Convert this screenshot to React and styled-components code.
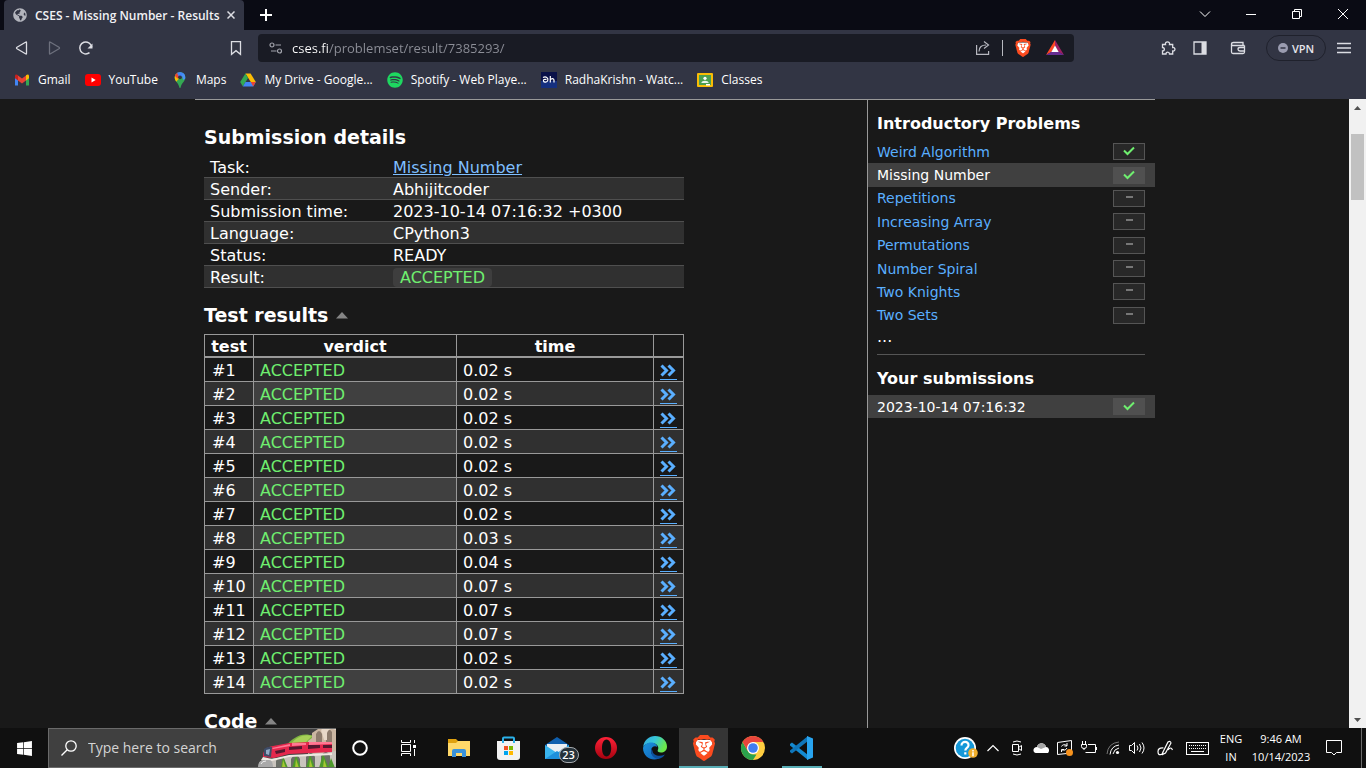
import React from "react";
import styled, { createGlobalStyle } from "styled-components";
import { FaSpotify, FaWindows, FaGlobeAmericas } from "react-icons/fa";
import { SiBrave } from "react-icons/si";

const GlobalStyle = createGlobalStyle`
  *, *::before, *::after { box-sizing: border-box; }
  html, body { margin: 0; padding: 0; background: #191919; }
  body { font-family: "DejaVu Sans", Verdana, sans-serif; color: #fff; }
  button { border: 0; padding: 0; background: none; color: inherit; font: inherit; }
  h2, h3, ul { margin: 0; padding: 0; }
  svg { display: block; flex: none; }
`;

const ui = `"Open Sans", "Segoe UI", sans-serif`;

const Desktop = styled.div`
  display: flex;
  flex-direction: column;
  height: 100vh;
  overflow: hidden;
`;

/* ---------- browser chrome ---------- */

const Browser = styled.header`
  flex: none;
  font-family: ${ui};
  background: #323544;
`;

const TabStrip = styled.div`
  display: flex;
  align-items: stretch;
  height: 30px;
  padding-left: 4px;
  background: #0a0b14;
`;

const Tab = styled.div`
  display: flex;
  align-items: center;
  width: 240px;
  padding: 0 6px 0 9px;
  border-radius: 4px 4px 0 0;
  background: #323544;
  color: #f1f1f4;
  font-size: 12px;
  font-weight: 600;
`;

const TabTitle = styled.span`
  flex: 1;
  margin-left: 8px;
  white-space: nowrap;
`;

const IconButton = styled.button`
  display: flex;
  align-items: center;
  justify-content: center;
  width: ${(p) => p.$w || 32}px;
  height: ${(p) => p.$h || 28}px;
  color: ${(p) => p.$color || "#dcdde3"};
`;

const WindowControls = styled.div`
  display: flex;
  margin-left: auto;
`;

const Toolbar = styled.div`
  display: flex;
  align-items: center;
  height: 36px;
  padding: 0 6px;
`;

const NavButtons = styled.div`
  display: flex;
  margin-right: 118px;
`;

const AddressBar = styled.div`
  display: flex;
  flex: 1;
  align-items: center;
  height: 28px;
  margin: 0 78px 0 6px;
  padding: 0 7px 0 11px;
  border-radius: 4px;
  background: #191b24;
`;

const UrlInput = styled.input`
  flex: 1;
  min-width: 0;
  height: 22px;
  margin-left: 9px;
  padding: 0;
  border: 0;
  outline: 0;
  font: 13px/22px ${ui};
  color: #fff;
  background: linear-gradient(90deg, #fff 36px, #8d8f98 36px);
  background-clip: text;
  -webkit-text-fill-color: transparent;
`;

const AddressActions = styled.div`
  display: flex;
  align-items: center;
  gap: 11px;
`;

const Rule = styled.span`
  width: 1px;
  height: 16px;
  background: #b8b9c0;
`;

const Extensions = styled.div`
  display: flex;
  align-items: center;
`;

const VpnButton = styled.button`
  display: flex;
  align-items: center;
  justify-content: center;
  gap: 4px;
  width: 60px;
  height: 26px;
  margin: 0 2px 0 6px;
  border: 1px solid #1f212c;
  border-radius: 13px;
  color: #e6e6ec;
  font-size: 11px;
  font-weight: 600;
`;

const Bookmarks = styled.nav`
  display: flex;
  align-items: center;
  gap: 14px;
  height: 33px;
  padding: 0 14px 5px;
`;

const Bookmark = styled.a`
  display: flex;
  align-items: center;
  gap: 8px;
  color: #fff;
  font-size: 12px;
  line-height: 16px;
  text-decoration: none;
  white-space: nowrap;
`;

/* ---------- page ---------- */

const Viewport = styled.div`
  display: flex;
  flex: 1;
  min-height: 0;
`;

const Page = styled.div`
  display: flex;
  flex: 1;
  justify-content: center;
  padding-left: 1px;
  overflow: hidden;
  background: #191919;
`;

const Columns = styled.div`
  display: grid;
  grid-template-columns: 1fr 288px;
  width: 100%;
  max-width: 960px;
  border-top: 1px solid #999;
`;

const Main = styled.main`
  padding: 10px 9px 0;
`;

const SectionTitle = styled.h2`
  display: flex;
  align-items: center;
  gap: 8px;
  margin: 16px 0 8px;
  font-size: 19px;
  line-height: 22px;
  font-weight: 700;
`;

const Summary = styled.table`
  width: 480px;
  border-collapse: separate;
  border-spacing: 0;
  font-size: 16px;
  line-height: 19px;
  tr:nth-child(even) { background: #303030; }
  th, td {
    height: 22px;
    padding: 2px 6px 0;
    border-bottom: 1px solid #4f4f4f;
    text-align: left;
    font-weight: 400;
  }
  th { width: 183px; }
`;

const TaskLink = styled.a`
  color: #7fbfff;
`;

const ResultChip = styled.span`
  display: block;
  width: max-content;
  padding: 0 7px;
  border-radius: 4px;
  background: #3e3e3e;
  color: #6fef6f;
`;

const Results = styled.table`
  width: 480px;
  table-layout: fixed;
  border-collapse: separate;
  border-spacing: 0;
  border: solid #999;
  border-width: 1px 0 0 1px;
  font-size: 16px;
  tr:nth-child(even) td { background: #303030; }
  th, td { border: solid #999; border-width: 0 1px 1px 0; text-align: left; }
  th { height: 23px; padding: 2px 0 0; border-bottom-width: 2px; line-height: 19px; text-align: center; }
  td { height: 24px; padding: 2px 6px 0; line-height: 21px; }
  td:first-child { padding-left: 7px; padding-right: 0; }
  tr:nth-child(n) td.verdict { background: #282828; color: #6fef6f; }
  tr:nth-child(even) td.verdict { background: #404040; }
`;

const Col = styled.col`
  width: ${(p) => p.$w}px;
`;

const DetailLink = styled.a`
  display: block;
  width: 17px;
  border-bottom: 1px solid #5aafff;
  color: #5aafff;
`;

const Sidebar = styled.aside`
  padding-top: 13px;
  border-left: 1px solid #999;
`;

const SideTitle = styled.h3`
  margin: 0 9px 7px;
  padding-top: 2px;
  font-size: 16px;
  line-height: 18px;
  font-weight: 700;
`;

const ProblemList = styled.ul`
  display: grid;
  grid-auto-rows: 1fr;
  height: ${(p) => p.$h}px;
  list-style: none;
`;

const ProblemLink = styled.a`
  display: flex;
  align-items: center;
  justify-content: space-between;
  height: 100%;
  padding: 0 10px 0 9px;
  background: ${(p) => (p.$current ? "#404040" : "transparent")};
  color: ${(p) => (p.$current ? "#fff" : "#5aafff")};
  font-size: 14px;
  line-height: 20px;
  text-decoration: none;
`;

const Score = styled.span`
  display: flex;
  justify-content: center;
  width: 32px;
  height: 17px;
  padding-top: ${(p) => (p.$done ? 2 : 5)}px;
  border: 1px solid ${(p) => (p.$current ? "#505050" : "#555")};
  background: ${(p) => (p.$current ? "#505050" : "#282828")};
  color: ${(p) => (p.$done ? "#6fef6f" : "#999")};
`;

const Dash = styled.span`
  width: 7px;
  height: 2px;
  background: #777;
`;

const More = styled.div`
  margin: 0 9px 7px;
  font-size: 16px;
  line-height: 20px;
`;

const Divider = styled.hr`
  margin: 0 10px 13px 9px;
  border: 0;
  border-top: 1px solid #555;
`;

const Scrollbar = styled.div`
  display: flex;
  flex: none;
  flex-direction: column;
  align-items: center;
  width: 17px;
  background: #f1f1f1;
`;

const Thumb = styled.div`
  width: 13px;
  height: 66px;
  margin: 18px 0 auto;
  background: #c1c1c1;
`;

/* ---------- taskbar ---------- */

const Taskbar = styled.footer`
  display: flex;
  flex: none;
  align-items: stretch;
  height: 40px;
  background: #101010;
  font-family: ${ui};
`;

const SearchBox = styled.label`
  display: flex;
  align-items: center;
  width: 288px;
  padding-left: 12px;
  border: solid #6a6a6a;
  border-width: 1px 0 1px 1px;
  background: #404040;
  overflow: hidden;
`;

const SearchInput = styled.input`
  flex: 1;
  min-width: 0;
  margin-left: 11px;
  padding: 0;
  border: 0;
  outline: 0;
  background: none;
  color: #fff;
  font: 14px/20px ${ui};
  &::placeholder { color: #d4d4d4; opacity: 1; }
`;

const TaskButton = styled(IconButton)`
  height: 40px;
`;

const Apps = styled.div`
  display: flex;
  margin-left: 2px;
`;

const AppButton = styled.button`
  display: flex;
  flex-direction: column;
  align-items: center;
  width: 49px;
  height: 40px;
  padding-top: 7px;
  background: ${(p) => (p.$active ? "#353535" : "none")};
`;

const Running = styled.span`
  width: ${(p) => (p.$wide ? 49 : 40)}px;
  height: 2px;
  margin-top: auto;
  background: #58adb5;
`;

const MailIcon = styled.span`
  position: relative;
`;

const Count = styled.span`
  position: absolute;
  top: 12px;
  left: 15px;
  width: 20px;
  height: 16px;
  border: 1px solid #a5a9ad;
  border-radius: 8px;
  background: #26323a;
  color: #fff;
  font-size: 11px;
  font-weight: 600;
  line-height: 14px;
  text-align: center;
`;

const Tray = styled.div`
  display: flex;
  align-items: center;
  margin-left: auto;
`;

const TrayText = styled.div`
  width: ${(p) => p.$w}px;
  color: #fff;
  font-size: 11px;
  line-height: 18px;
  text-align: center;
`;

const ShowDesktop = styled.button`
  width: 5px;
  height: 40px;
  margin-left: 6px;
  border-left: 1px solid #6b6b6b;
`;

/* ---------- icons ---------- */

const Line = ({ w = 16, h = 16, sw = 1, children }) => (
  <svg width={w} height={h} viewBox={`0 0 ${w} ${h}`} fill="none" stroke="currentColor" strokeWidth={sw} aria-hidden="true">
    {children}
  </svg>
);

const Gmail = () => (
  <svg width="16" height="16" viewBox="0 0 16 16">
    <path d="M1 5v8.500h3V7z" fill="#4285f4" />
    <path d="M15 5v8.500h-3V7z" fill="#34a853" />
    <path d="M4 3.500v5l4 3 4-3v-5L8 6.600z" fill="#ea4335" />
    <path d="M1 4c0-2 1.700-2 3-.8v5.300L1 6.200z" fill="#c5221f" />
    <path d="M15 4c0-2-1.700-2-3-.8v5.300l3-2.300z" fill="#fbbc04" />
  </svg>
);

const YouTube = () => (
  <svg width="16" height="16" viewBox="0 0 16 16">
    <rect x="0" y="2" width="16" height="12" rx="3" fill="#f00" />
    <path d="M6.500 5.500v5l4.200-2.500z" fill="#fff" />
  </svg>
);

const Maps = () => (
  <svg width="16" height="16" viewBox="0 0 16 16">
    <defs>
      <clipPath id="pin"><path d="M8 0a5.300 5.300 0 0 1 5.300 5.400C13.300 9.500 9.500 10.500 8.600 15.500q-.6 1-1.200 0C6.500 10.500 2.700 9.500 2.700 5.400A5.300 5.300 0 0 1 8 0z" /></clipPath>
    </defs>
    <g clipPath="url(#pin)">
      <rect width="16" height="16" fill="#34a853" />
      <path d="M0 5l4-3 4 3.400-4.500 5.100L0 9z" fill="#fbbc04" />
      <path d="M0 0h6L8 5 5.500 6.500 3 4z" fill="#ea4335" />
      <path d="M4.500 0H12l1 2-5 4.500z" fill="#4285f4" />
      <path d="M10 3l2.500-2L15 6l-4 2z" fill="#4a90f5" />
    </g>
    <circle cx="8" cy="5.300" r="1.900" fill="#323544" />
  </svg>
);

const Drive = () => (
  <svg width="16" height="16" viewBox="0 0 16 16">
    <path d="M5.400 1.500h5.200L15.800 10h-5z" fill="#fbbc04" />
    <path d="M5.400 1.500L8 6 2.900 14.500.2 10z" fill="#34a853" />
    <path d="M5.500 10h10.300l-2.600 4.500H2.900z" fill="#4285f4" />
    <path d="M10.700 10h5.100l-2.600 4.500z" fill="#ea4335" />
  </svg>
);

const Hotstar = () => (
  <svg width="16" height="16" viewBox="0 0 16 16">
    <rect width="16" height="16" fill="#0a1148" />
    <rect y="9" width="16" height="7" fill="#16307f" />
    <path d="M2 5.500c3-1.500 5.500.5 4.800 2.800S3 10.600 2.500 9s1-2 3-1.500M9.300 4v6.500M9.300 8c1-2 3.700-2 3.700.3v2.200" fill="none" stroke="#fff" strokeWidth="1.200" />
  </svg>
);

const Classroom = () => (
  <svg width="16" height="16" viewBox="0 0 16 16">
    <rect y="1" width="16" height="14" rx="1" fill="#f9bc05" />
    <rect x="2" y="3" width="12" height="10" fill="#4c9f50" />
    <circle cx="8" cy="6.300" r="1.600" fill="#fff" />
    <path d="M4.300 11c.3-3 7.100-3 7.400 0z" fill="#e8f5ec" />
    <rect x="9" y="12" width="4" height="1.500" fill="#fff" />
  </svg>
);

const BraveLion = ({ size }) => (
  <svg width={size} height={size} viewBox="0 0 24 24">
    <path d="M5 4.500h14l1 5-2.500 7L12 21l-5.500-4.500-2.500-7z" fill="#fff" />
    <SiBrave size={24} color="#fb4b1f" />
  </svg>
);

const Bat = () => (
  <svg width="18" height="16" viewBox="0 0 18 16">
    <path d="M9 0v6l-3.500 6L0 15z" fill="#ff4724" />
    <path d="M9 0l9 15-5.500-3L9 6z" fill="#9e1f63" />
    <path d="M0 15l5.500-3.200h7L18 15z" fill="#662d91" />
    <path d="M9 5.500l3.700 6.500H5.300z" fill="#fff" />
  </svg>
);

const Caret = () => (
  <svg width="12" height="7" viewBox="0 0 12 7"><path d="M0 6.500L6 0l6 6.500z" fill="#858585" /></svg>
);

const Chevrons = () => (
  <svg width="17" height="17" viewBox="0 0 17 17" fill="none" stroke="currentColor" strokeWidth="3">
    <path d="M1.500 3.500L6.500 8.500l-5 5M8.500 3.500l5 5-5 5" />
  </svg>
);

const Check = () => (
  <svg width="12" height="10" viewBox="0 0 12 10" fill="none" stroke="currentColor" strokeWidth="2">
    <path d="M1 4.500L4.500 8 11 1.500" />
  </svg>
);

const ScrollArrow = ({ down }) => (
  <svg width="17" height="17" viewBox="0 0 17 17">
    <path d={down ? "M5 7h7l-3.500 4z" : "M5 11h7L8.500 7z"} fill="#505050" />
  </svg>
);

const Train = () => (
  <svg width="78" height="40" viewBox="0 0 78 40">
    <path d="M26 20C36 8 44 4 56 8v16z" fill="#7eb440" />
    <path d="M32 17C39 8 47 6 54 8l-9 9z" fill="#a7cf58" />
    <path d="M50 13l4-3V5l6-4 4-1h14v40H50z" fill="#cbb6a2" />
    <path d="M58 14V6q3-6 6 0v8zM68 14V4q3-5 6 0v10z" fill="#8d7b6c" />
    <path d="M64 5q-2-3 1-5h13v2q-7-3-9 3v7h-3z" fill="#e8d8c8" />
    <path d="M1 40c-2-7 4-9 10-9l67-8v17z" fill="#c9c4bd" />
    <path d="M18 40v-7q5-9 9 0v7zM33 40v-9q5-8 9 0v9zM48 40V29q5-8 9 0v11zM63 40V28q5-8 9 0v12z" fill="#6b6f68" />
    <path d="M23 40l2-12 5 12zM34 40l4-13 5 13zM48 40l4-14 5 14zM61 40l4-14 6 14zM70 40l3-10 4 10z" fill="#4e9a2b" />
    <path d="M24 40l1-8 3 8zM37 40l1-9 3 9zM51 40l1-9 3 9zM65 40l1-9 3 9z" fill="#a5c732" />
    <path d="M5 29c0-7 3-10 10-11l16-3 20-1h23v10l-43 2-15 4z" fill="#e5284d" />
    <path d="M14 20l18-4v2l-17 3zM34 15h14v2l-14 1zM51 14h23v2l-23 1z" fill="#ff7893" />
    <path d="M17 23l10-2v3l-9 2zM31 19l13-1v3l-13 1zM50 17h12v3l-12 1zM65 17h9v3h-9z" fill="#55182f" />
    <path d="M6 21q4-3 8-2l-1 10-7-1z" fill="#3d4c68" />
    <path d="M8 22l4-1-1 6-3-1z" fill="#91aac5" />
    <path d="M5 29l9 2 17-4 43-2v2l-43 2-17 4-11-1z" fill="#eee8e2" />
    <path d="M0 40q0-8 6-8h5q4 0 4 8z" fill="#a9a9a9" />
    <path d="M3 36q1-3 5-3" stroke="#ededed" fill="none" />
  </svg>
);

const Explorer = () => (
  <svg width="24" height="26" viewBox="0 0 24 26">
    <path d="M1 4h8l2 2h11v15H1z" fill="#e0a10e" />
    <path d="M1 8h8l2-2h12v15H1z" fill="#ffd869" />
    <path d="M5 22v-6q0-2 2-2h10q2 0 2 2v6h-4v-4H9v4z" fill="#3a92da" />
  </svg>
);

const Store = () => (
  <svg width="24" height="26" viewBox="0 0 24 26">
    <path d="M1 6h23v16q0 3-3 3H4q-3 0-3-3z" fill="#f2f2f2" />
    <path d="M7 8V3.500q0-1 1-1h9q1 0 1 1V8" fill="none" stroke="#2bb1ea" strokeWidth="2" />
    <rect x="8" y="11" width="4" height="4" fill="#f25022" />
    <rect x="13" y="11" width="4" height="4" fill="#7fba00" />
    <rect x="8" y="16" width="4" height="4" fill="#00a4ef" />
    <rect x="13" y="16" width="4" height="4" fill="#ffb900" />
  </svg>
);

const Mail = () => (
  <svg width="26" height="26" viewBox="0 0 26 26">
    <path d="M1 10L13 2l12 8v14H1z" fill="#0f5fae" />
    <path d="M3 9h20v8H3z" fill="#e9eef3" />
    <path d="M1 10l12 8 12-8v14H1z" fill="#39b4ee" />
    <path d="M1 24l12-8 12 8z" fill="#1e90dc" />
  </svg>
);

const Opera = () => (
  <svg width="26" height="26" viewBox="0 0 26 26">
    <defs>
      <linearGradient id="op" x2="0" y2="1"><stop stopColor="#ff2238" /><stop offset="1" stopColor="#a5020f" /></linearGradient>
    </defs>
    <path fillRule="evenodd" fill="url(#op)" d="M13 2a11 11 0 1 0 0 22 11 11 0 1 0 0-22zM13.500 4.500c3 0 4.700 4 4.700 8.500s-1.700 8.500-4.700 8.500S9 17.500 9 13s1.500-8.500 4.500-8.500z" />
  </svg>
);

const Edge = () => (
  <svg width="26" height="26" viewBox="0 0 26 26">
    <defs>
      <linearGradient id="ed1" x1="0" y1="0" x2="1" y2=".4"><stop stopColor="#35a8df" /><stop offset=".5" stopColor="#36c6d8" /><stop offset="1" stopColor="#6be84a" /></linearGradient>
      <linearGradient id="ed2" x2="1" y2="1"><stop stopColor="#1b93dc" /><stop offset="1" stopColor="#1060b8" /></linearGradient>
    </defs>
    <path d="M1.200 12C2 5 7 1 13 1c7 0 12 5 12 10.500 0 4-3 6-6 6-2.500 0-4-1-3.200-2.500C17.500 12 15 8 10 8c-4 0-7.500 1.500-8.800 4z" fill="url(#ed1)" />
    <path d="M1 13c.5-3 4-5.500 8-5.500 3.500 0 6 2 6.300 4.500-3-2-6.300.5-6.300 4 0 5 6 7.500 11 5C14 28 1 24 1 13z" fill="url(#ed2)" />
    <path d="M9.500 13.500C7.500 19 12 25 18 23.500c2-.8 4-2 4.800-4-5 2.500-12 1-12.300-3.500z" fill="#0d4f9d" />
  </svg>
);

const Chrome = () => (
  <svg width="26" height="26" viewBox="0 0 26 26">
    <circle cx="13" cy="13" r="12" fill="#ffcd40" />
    <path d="M2.600 7l5.200 9q2 3.500 5.200 3.500h3.500L13 25A12 12 0 0 1 2.600 7z" fill="#2ba24c" />
    <path d="M2.600 7A12 12 0 0 1 23.400 7H13L7.800 16z" fill="#e8453c" />
    <circle cx="13" cy="13" r="6" fill="#fff" />
    <circle cx="13" cy="13" r="4.800" fill="#3f7df0" />
  </svg>
);

const VsCode = () => (
  <svg width="26" height="26" viewBox="0 0 26 26">
    <path d="M1 9l2-1.500L19 20v5L1 10.500z" fill="#1489d0" />
    <path d="M1 17l2 1.500L19 6V1L1 15.500z" fill="#0f76ba" />
    <path d="M18 1l6 2.500v19L18 25z" fill="#28a4ef" />
  </svg>
);

const Help = () => (
  <svg width="24" height="24" viewBox="0 0 24 24">
    <circle cx="11" cy="12" r="11" fill="#fff" />
    <circle cx="11" cy="12" r="9.300" fill="#1598d8" />
    <path d="M7.500 9.500c0-5 7.500-4.500 7 0-.3 2.500-3.200 2.500-3.200 5M11.300 16.300v2.300" fill="none" stroke="#fff" strokeWidth="2.200" />
    <circle cx="19" cy="17" r="4.800" fill="#f0ae2d" />
    <path d="M19 14v1.400M19 16.200v4" stroke="#fff" strokeWidth="1.500" />
  </svg>
);

/* ---------- data ---------- */

const bookmarks = [
  ["Gmail", <Gmail />],
  ["YouTube", <YouTube />],
  ["Maps", <Maps />],
  ["My Drive - Google...", <Drive />],
  ["Spotify - Web Playe...", <FaSpotify size={16} color="#1ed760" />],
  ["RadhaKrishn - Watc...", <Hotstar />],
  ["Classes", <Classroom />],
];

const problems = [
  "Weird Algorithm", "Missing Number", "Repetitions", "Increasing Array",
  "Permutations", "Number Spiral", "Two Knights", "Two Sets",
];

const times = ["0.02", "0.02", "0.02", "0.02", "0.02", "0.02", "0.02", "0.03", "0.04", "0.07", "0.07", "0.07", "0.02", "0.02"];

const details = [
  ["Task:", <TaskLink href="#task">Missing Number</TaskLink>],
  ["Sender:", "Abhijitcoder"],
  ["Submission time:", "2023-10-14 07:16:32 +0300"],
  ["Language:", "CPython3"],
  ["Status:", "READY"],
  ["Result:", <ResultChip>ACCEPTED</ResultChip>],
];

function SideItem({ label, done, current }) {
  return (
    <li>
      <ProblemLink href="#problem" $current={current}>
        {label}
        <Score $done={done} $current={current}>
          {done ? <Check /> : <Dash />}
        </Score>
      </ProblemLink>
    </li>
  );
}

function BrowserChrome() {
  return (
    <Browser>
      <TabStrip>
        <Tab>
          <FaGlobeAmericas size={14} color="#b3b5bd" />
          <TabTitle>CSES - Missing Number - Results</TabTitle>
          <IconButton $w={14} $h={14} aria-label="Close tab">
            <Line w={8} h={8} sw={1.500}><path d="M.5.5l7 7M7.500.5l-7 7" /></Line>
          </IconButton>
        </Tab>
        <IconButton $w={44} $h={30} $color="#fff" aria-label="New tab">
          <Line w={12} h={12} sw={2}><path d="M6 0v12M0 6h12" /></Line>
        </IconButton>
        <WindowControls>
          <IconButton $w={46} $color="#fff" aria-label="Search tabs"><Line w={12} h={8}><path d="M1 1.500l5 5 5-5" /></Line></IconButton>
          <IconButton $w={46} $color="#fff" aria-label="Minimize"><Line w={10} h={2}><path d="M0 1.500h10" /></Line></IconButton>
          <IconButton $w={46} $color="#fff" aria-label="Restore">
            <Line w={10} h={10}><path d="M.5 2.500h7v7h-7zM2.500 2V.5h7v7H8" /></Line>
          </IconButton>
          <IconButton $w={46} $color="#fff" aria-label="Close"><Line w={10} h={10}><path d="M0 0l10 10M10 0L0 10" /></Line></IconButton>
        </WindowControls>
      </TabStrip>

      <Toolbar>
        <NavButtons>
          <IconButton aria-label="Back"><Line sw={1.300}><path d="M12.500 2.500v11q0 1-1 .3L3 8.700q-1-.7 0-1.400l8.500-5.100q1-.7 1 .3z" /></Line></IconButton>
          <IconButton $color="#6d707d" aria-label="Forward"><Line sw={1.300}><path d="M3.500 2.500v11q0 1 1 .3L13 8.700q1-.7 0-1.400L4.500 2.200q-1-.7-1 .3z" /></Line></IconButton>
          <IconButton aria-label="Reload">
            <Line sw={1.500}><path d="M11.500 12.700A6 6 0 1 1 13.700 7" /><path d="M14.500 3.500V8.500H9.500z" fill="currentColor" stroke="none" /></Line>
          </IconButton>
        </NavButtons>
        <IconButton aria-label="Bookmark this page"><Line sw={1.300}><path d="M3.500 1.700h9v12.600L8 10.700l-4.500 3.600z" /></Line></IconButton>
        <AddressBar>
          <IconButton $w={14} $h={14} $color="#a2a4ac" aria-label="Site information">
            <Line w={14} h={14} sw={1.200}><circle cx="3" cy="4" r="2" /><path d="M6.500 4H12M2 10h5.500" /><circle cx="10.500" cy="10" r="2" /></Line>
          </IconButton>
          <UrlInput aria-label="Address" defaultValue="cses.fi/problemset/result/7385293/" />
          <AddressActions>
            <IconButton $w={16} $h={16} $color="#b6b7bf" aria-label="Share">
              <Line sw={1.200}><path d="M1.600 5v9.400h12V11M4 11.500c0-4.500 3-6.500 7-6.500M9 1.500L13.500 5 9 8.500" /></Line>
            </IconButton>
            <Rule />
            <IconButton $w={18} $h={18} aria-label="Brave Shields"><BraveLion size={18} /></IconButton>
            <IconButton $w={24} $h={18} aria-label="Brave Rewards"><Bat /></IconButton>
          </AddressActions>
        </AddressBar>
        <Extensions>
          <IconButton aria-label="Extensions">
            <Line sw={1.300}><path d="M2.500 4.500h3C4.500 1 10.500 1 9.500 4.500h3.200v3c3-.5 3 4 0 3.500v3H9.500c0-2.500-3.500-2.500-3.500 0H2.500v-3c2.500 0 2.500-3.500 0-3.500z" /></Line>
          </IconButton>
          <IconButton aria-label="Sidebar"><Line sw={1.300}><path d="M2 2h12v12H2z" /><path d="M9.500 2H14v12H9.500z" fill="currentColor" stroke="none" /></Line></IconButton>
          <IconButton $w={44} aria-label="Wallet">
            <Line sw={1.300}><path d="M14.500 5.500h-11q-2 0-2-1.500t2-1.500h9.500v3M1.500 4v8q0 1.500 1.500 1.500h10q1.500 0 1.500-1.500V5.500M14.500 7.500H10q-2 0-2 1.700t2 1.800h4.500" /></Line>
          </IconButton>
          <VpnButton>
            <Line w={10} h={10}><circle cx="5" cy="5" r="5" fill="#9a9cb0" stroke="none" /><path d="M2.500 5h5" stroke="#323544" strokeWidth="1.500" /></Line>
            VPN
          </VpnButton>
          <IconButton aria-label="Menu"><Line w={14} h={12} sw={1.300}><path d="M0 1.500h14M0 6h14M0 10.500h14" /></Line></IconButton>
        </Extensions>
      </Toolbar>

      <Bookmarks aria-label="Bookmarks">
        {bookmarks.map(([label, icon]) => (
          <Bookmark key={label} href="#bookmark">{icon}{label}</Bookmark>
        ))}
      </Bookmarks>
    </Browser>
  );
}

function SubmissionPage() {
  return (
    <Viewport>
      <Page>
        <Columns>
          <Main>
            <SectionTitle>Submission details</SectionTitle>
            <Summary>
              <tbody>
                {details.map(([name, value]) => (
                  <tr key={name}><th scope="row">{name}</th><td>{value}</td></tr>
                ))}
              </tbody>
            </Summary>

            <SectionTitle>Test results <button aria-label="Collapse test results"><Caret /></button></SectionTitle>
            <Results>
              <colgroup><Col $w={49} /><Col $w={203} /><Col $w={197} /><Col $w={30} /></colgroup>
              <thead>
                <tr><th>test</th><th>verdict</th><th>time</th><th aria-label="details" /></tr>
              </thead>
              <tbody>
                {times.map((t, i) => (
                  <tr key={i}>
                    <td>#{i + 1}</td>
                    <td className="verdict">ACCEPTED</td>
                    <td>{t} s</td>
                    <td><DetailLink href="#test" aria-label={`Test ${i + 1}`}><Chevrons /></DetailLink></td>
                  </tr>
                ))}
              </tbody>
            </Results>

            <SectionTitle>Code <button aria-label="Collapse code"><Caret /></button></SectionTitle>
          </Main>

          <Sidebar>
            <SideTitle>Introductory Problems</SideTitle>
            <ProblemList $h={187}>
              {problems.map((p, i) => (
                <SideItem key={p} label={p} done={i < 2} current={i === 1} />
              ))}
            </ProblemList>
            <More>...</More>
            <Divider />
            <SideTitle>Your submissions</SideTitle>
            <ProblemList $h={23}>
              <SideItem label="2023-10-14 07:16:32" done current />
            </ProblemList>
          </Sidebar>
        </Columns>
      </Page>
      <Scrollbar aria-hidden="true">
        <ScrollArrow />
        <Thumb />
        <ScrollArrow down />
      </Scrollbar>
    </Viewport>
  );
}

function WindowsTaskbar() {
  return (
    <Taskbar>
      <TaskButton $w={48} $color="#fff" aria-label="Start"><FaWindows size={17} /></TaskButton>
      <SearchBox>
        <Line w={16} h={16} sw={1.300}><circle cx="10" cy="6" r="5.200" /><path d="M6.200 9.800L.5 15.500" /></Line>
        <SearchInput placeholder="Type here to search" aria-label="Search" />
        <Train />
      </SearchBox>
      <TaskButton $w={48} $color="#fff" aria-label="Cortana"><Line sw={2}><circle cx="8" cy="8" r="6.800" /></Line></TaskButton>
      <TaskButton $w={48} $color="#fff" aria-label="Task view">
        <Line><path d="M1.500 4.500h9v7h-9zM1.500 0v2.500h9V0M1.500 16v-2.500h9V16M14.500 0v3M14.500 9v7" /><path d="M13 5h3v3h-3z" fill="currentColor" stroke="none" /></Line>
      </TaskButton>
      <Apps>
        <AppButton aria-label="File Explorer"><Explorer /></AppButton>
        <AppButton aria-label="Microsoft Store"><Store /></AppButton>
        <AppButton aria-label="Mail"><MailIcon><Mail /><Count>23</Count></MailIcon></AppButton>
        <AppButton aria-label="Opera"><Opera /></AppButton>
        <AppButton aria-label="Edge"><Edge /></AppButton>
        <AppButton $active aria-label="Brave"><BraveLion size={26} /><Running $wide /></AppButton>
        <AppButton aria-label="Chrome"><Chrome /></AppButton>
        <AppButton aria-label="Visual Studio Code"><VsCode /><Running /></AppButton>
      </Apps>
      <Tray>
        <IconButton $w={30} aria-label="Get help"><Help /></IconButton>
        <IconButton $w={24} $color="#fff" aria-label="Show hidden icons"><Line w={12} h={8} sw={1.200}><path d="M.5 7L6 1.500 11.500 7" /></Line></IconButton>
        <IconButton $w={24} $color="#fff" aria-label="Meet now">
          <Line w={12} h={16}><path d="M1.500 4.500h6v7h-6zM7.500 7.500l3-2v5l-3-2M2 2q4-2 8 0M2 14q4 2 8 0" /></Line>
        </IconButton>
        <IconButton $w={24} aria-label="OneDrive">
          <svg width="16" height="12" viewBox="0 0 16 12"><path d="M3 11C-1 10 0 5 4 5c1-5 8-5 9 0 3 0 4 4 2 6z" fill="#fff" /><path d="M4 5c1-5 8-5 9 0L8 7z" fill="#a6a6a6" /></svg>
        </IconButton>
        <IconButton $w={24} $color="#fff" aria-label="Update">
          <Line><path d="M.5 2.500l14-2V13l-14 1.500zM4.500 6.500q1.500-3 5.500-1M10 3v3H7.500M10 8q-1 3-5 2M4.500 12V9.500H7" /><circle cx="12.500" cy="12.500" r="3.500" fill="#f7931e" stroke="none" /></Line>
        </IconButton>
        <IconButton $w={24} $color="#fff" aria-label="Battery">
          <Line><path d="M4.500 12.500h10v-8H7M15.500 7v3M1.500 1v3M4.500 1v3M.5 4.500h5v2q0 2-2.500 2t-2.500-2zM3 8.500V10" /></Line>
        </IconButton>
        <IconButton $w={24} $color="#fff" aria-label="Wi-Fi">
          <Line w={14} h={14}><path d="M7 13q1-5 6-6M4 13.500Q5 5 13 4" /><path d="M1 13Q2 2 13 1" stroke="#777" /><circle cx="11.500" cy="11.500" r="1.600" fill="currentColor" stroke="none" /></Line>
        </IconButton>
        <IconButton $w={24} $color="#fff" aria-label="Volume">
          <Line><path d="M.5 5.500h2l3-3v11l-3-3h-2zM8 5.500q2 2.500 0 5M10.500 4q3 4 0 8M13 2.500q4 5.500 0 11" /></Line>
        </IconButton>
        <IconButton aria-label="Ink workspace" $color="#fff">
          <Line sw={1.200}><path d="M5.500 13L11 2q2.500-1.500 3 1L8.500 13l-3 1.500zM6.500 8Q1 7.500 1 11.500t3 3q2 0 2-3M11 10q3-4 4.500 0" /></Line>
        </IconButton>
        <IconButton $color="#fff" aria-label="Touch keyboard">
          <Line w={23} h={13}><rect x=".5" y=".5" width="22" height="12" /><path d="M3 3.500h17M3 6.500h17" strokeDasharray="1 1" /><path d="M5 9.500h13" /></Line>
        </IconButton>
        <TrayText $w={36}>ENG<br />IN</TrayText>
        <TrayText $w={64}>9:46 AM<br />10/14/2023</TrayText>
        <IconButton $w={42} $color="#fff" aria-label="Notifications">
          <Line w={16} h={16}><path d="M.5.5h15v12h-5L8 15l-2.500-2.500h-5z" /></Line>
        </IconButton>
      </Tray>
      <ShowDesktop aria-label="Show desktop" />
    </Taskbar>
  );
}

export default function App() {
  return (
    <Desktop>
      <GlobalStyle />
      <BrowserChrome />
      <SubmissionPage />
      <WindowsTaskbar />
    </Desktop>
  );
}
